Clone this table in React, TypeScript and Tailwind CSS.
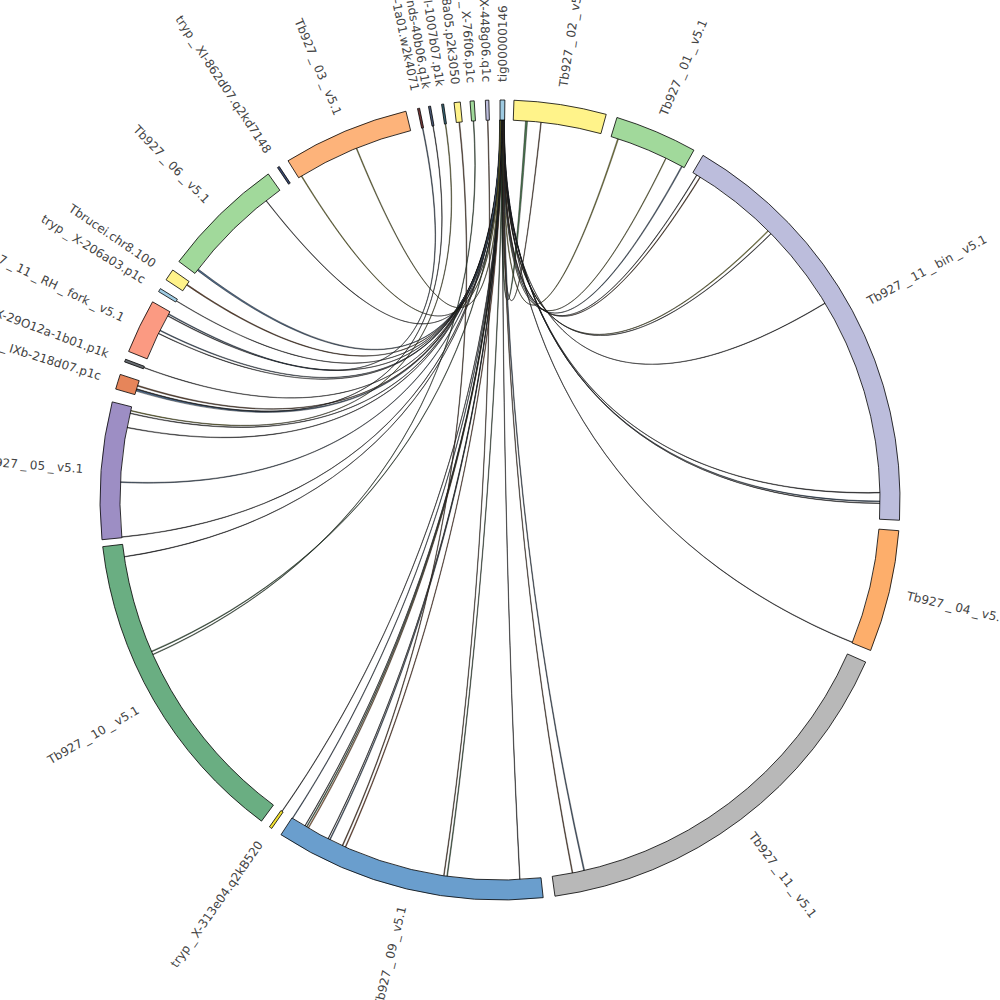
import React from 'react';

const CX = 500;
const CY = 500;
const RI = 380;
const RO = 400;
const RL = 418;
const RC = 140;

type Seg = { name: string; a1: number; a2: number; color: string };

const segments: Seg[] = [
  { name: 'tig00000146', a1: 0, a2: 0.7, color: '#9ecae1' },
  { name: 'Tb927_02_v5.1', a1: 2.0, a2: 15.4, color: '#fff38a' },
  { name: 'Tb927_01_v5.1', a1: 17.0, a2: 29.0, color: '#a1d99b' },
  { name: 'Tb927_11_bin_v5.1', a1: 30.5, a2: 92.9, color: '#bcbddc' },
  { name: 'Tb927_04_v5.1', a1: 94.4, a2: 112.1, color: '#fdae6b' },
  { name: 'Tb927_11_v5.1', a1: 113.9, a2: 172.1, color: '#b8b8b8' },
  { name: 'Tb927_09_v5.1', a1: 173.8, a2: 213.2, color: '#6a9ecd' },
  { name: 'tryp_X-313e04.q2kB520', a1: 214.8, a2: 215.2, color: '#f2e030' },
  { name: 'Tb927_10_v5.1', a1: 216.6, a2: 263.3, color: '#6aae82' },
  { name: 'Tb927_05_v5.1', a1: 264.3, a2: 284.2, color: '#9d8ec4' },
  { name: 'tryp_IXb-218d07.p1c', a1: 286.1, a2: 288.3, color: '#e6855a' },
  { name: 'tryp_X-29O12a-1b01.p1k', a1: 290.2, a2: 290.6, color: '#666b70' },
  { name: 'Tb927_11_RH_fork_v5.1', a1: 291.8, a2: 299.7, color: '#fb9a82' },
  { name: 'tryp_X-206a03.p1c', a1: 301.4, a2: 301.9, color: '#9ecae1' },
  { name: 'Tbrucei.chr8.100', a1: 303.4, a2: 305.1, color: '#fff38a' },
  { name: 'Tb927_06_v5.1', a1: 306.6, a2: 324.6, color: '#a1d99b' },
  { name: 'tryp_XI-862d07.q2kd7148', a1: 326.2, a2: 326.5, color: '#3b4b73' },
  { name: 'Tb927_03_v5.1', a1: 328.0, a2: 346.4, color: '#fdb37a' },
  { name: 'tryp_XI-1a01.w2k4071', a1: 348.1, a2: 348.4, color: '#7a3a3a' },
  { name: 'tryp_ends-40b06.q1k', a1: 349.7, a2: 350.0, color: '#4a5a7a' },
  { name: 'tryp_XI-1007b07.p1k', a1: 351.6, a2: 351.9, color: '#3a6a7a' },
  { name: 'tryp_X-8a05.p2k3050', a1: 353.4, a2: 354.3, color: '#fff38a' },
  { name: 'tryp_X-76f06.p1c', a1: 355.7, a2: 356.3, color: '#a1d99b' },
  { name: 'tryp_X-448g06.q1c', a1: 357.9, a2: 358.4, color: '#bcbddc' },
];

const G = '#4a7a50';
const B = '#7a5236';
const O = '#9a9a38';
const S = '#4e6a8a';
const D = '#2e2e34';
const R = '#a0502a';
const Or = '#d08040';

// [source angle, target angle, ribbon width in degrees, fill]
const links: [number, number, number, string][] = [
  [0.3, 4.0, 0.3, G],
  [0.4, 6.2, 0.1, B],
  [0.45, 18.1, 0.15, O],
  [0.5, 25.9, 0.1, O],
  [0.5, 28.6, 0.15, S],
  [0.55, 31.2, 0.08, D],
  [0.55, 31.8, 0.1, B],
  [0.6, 44.9, 0.12, O],
  [0.6, 45.5, 0.08, D],
  [0.62, 58.8, 0.08, D],
  [0.62, 88.9, 0.1, D],
  [0.62, 90.2, 0.12, S],
  [0.62, 90.5, 0.08, D],
  [0.6, 112.0, 0.08, D],
  [0.55, 167.2, 0.15, S],
  [0.5, 169.0, 0.12, B],
  [0.45, 177.0, 0.08, D],
  [0.4, 188.0, 0.12, G],
  [0.35, 204.0, 0.12, R],
  [0.3, 206.6, 0.12, S],
  [0.3, 206.9, 0.08, D],
  [0.3, 210.3, 0.12, Or],
  [0.28, 210.6, 0.12, G],
  [0.28, 210.9, 0.08, D],
  [0.25, 213.1, 0.1, S],
  [0.25, 215.0, 0.08, D],
  [0.2, 246.5, 0.12, G],
  [0.2, 261.4, 0.08, D],
  [0.18, 264.4, 0.08, D],
  [0.18, 272.7, 0.12, S],
  [0.15, 281.0, 0.1, D],
  [0.15, 283.2, 0.1, D],
  [0.12, 286.8, 0.3, S],
  [0.12, 287.5, 0.15, B],
  [0.1, 290.4, 0.08, D],
  [0.1, 296.0, 0.08, D],
  [0.1, 296.5, 0.12, S],
  [0.08, 299.0, 0.1, D],
  [0.08, 301.6, 0.08, D],
  [0.08, 304.5, 0.15, B],
  [0.06, 307.3, 0.25, S],
  [0.06, 322.0, 0.08, D],
  [0.05, 328.5, 0.12, O],
  [0.05, 337.8, 0.12, O],
  [348.25, 299.3, 0.12, S],
  [349.85, 287.0, 0.08, D],
  [351.75, 283.6, 0.1, O],
  [353.85, 204.5, 0.12, B],
  [356.0, 246.0, 0.1, G],
  [358.15, 188.5, 0.1, B],
];

const rad = (a: number) => (a * Math.PI) / 180;
const pt = (a: number, r: number) => [CX + r * Math.sin(rad(a)), CY - r * Math.cos(rad(a))];
const P = (a: number, r: number) => {
  const [x, y] = pt(a, r);
  return `${x.toFixed(2)} ${y.toFixed(2)}`;
};

const segPath = (a1: number, a2: number) => {
  const large = a2 - a1 > 180 ? 1 : 0;
  return `M ${P(a1, RO)} A ${RO} ${RO} 0 ${large} 1 ${P(a2, RO)} L ${P(a2, RI)} A ${RI} ${RI} 0 ${large} 0 ${P(a1, RI)} Z`;
};

const linkPath = (s: number, t: number, w: number) => {
  const s1 = s - w / 2;
  const s2 = s + w / 2;
  const t1 = t - w / 2;
  const t2 = t + w / 2;
  return (
    `M ${P(s1, RI)} C ${P(s1, RC)} ${P(t2, RC)} ${P(t2, RI)} ` +
    `A ${RI} ${RI} 0 0 0 ${P(t1, RI)} ` +
    `C ${P(t1, RC)} ${P(s2, RC)} ${P(s2, RI)} ` +
    `A ${RI} ${RI} 0 0 0 ${P(s1, RI)} Z`
  );
};

const Label = ({ seg }: { seg: Seg }) => {
  const a = (seg.a1 + seg.a2) / 2;
  const [x, y] = pt(a, RL);
  const right = a < 180;
  const rot = right ? a - 90 : a + 90;
  const parts = seg.name.split('_');
  return (
    <text
      x={x}
      y={y}
      transform={`rotate(${rot.toFixed(2)} ${x.toFixed(2)} ${y.toFixed(2)})`}
      textAnchor={right ? 'start' : 'end'}
      dominantBaseline="central"
      fontFamily="'DejaVu Sans', sans-serif"
      fontSize={12}
      fill="#444"
    >
      {parts.map((p, i) =>
        i === 0 ? (
          <tspan key={i}>{p}</tspan>
        ) : (
          <React.Fragment key={i}>
            <tspan dx={3}>_</tspan>
            <tspan dx={3}>{p}</tspan>
          </React.Fragment>
        )
      )}
    </text>
  );
};

export default function App() {
  return (
    <div className="w-[1000px] h-[1000px] bg-white overflow-hidden">
      <svg width={1000} height={1000} viewBox="0 0 1000 1000" className="block">
        {links.map(([s, t, w, c], i) => (
          <path key={i} d={linkPath(s, t, w)} fill={c} stroke="#111" strokeWidth={0.45} />
        ))}
        {segments.map((seg) => (
          <path key={seg.name} d={segPath(seg.a1, seg.a2)} fill={seg.color} stroke="#000" strokeWidth={0.8} />
        ))}
        {segments.map((seg) => (
          <Label key={seg.name} seg={seg} />
        ))}
      </svg>
    </div>
  );
}
